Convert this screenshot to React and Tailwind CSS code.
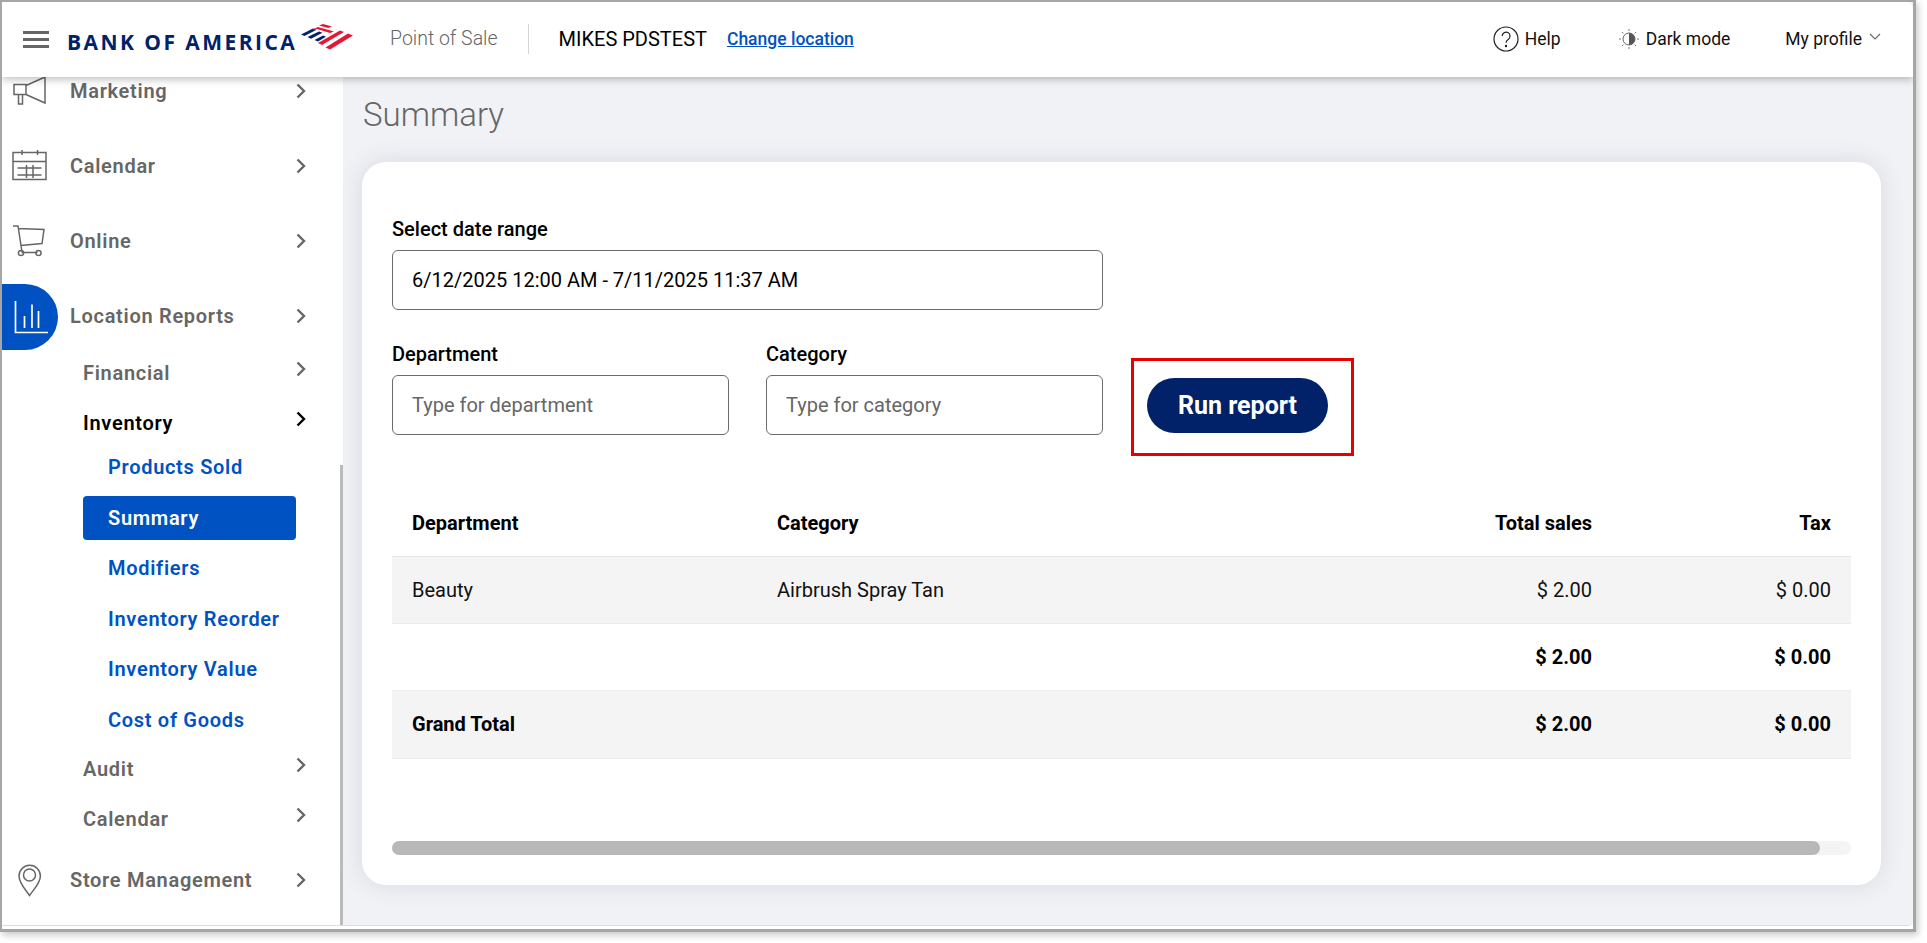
import React from "react";

const Chevron = ({ className = "", color = "#666" }) => (
  <svg width="12" height="16" viewBox="0 0 12 16" fill="none" className={"shrink-0 " + className}>
    <path d="M2.5 1.5 9 8l-6.5 6.5" stroke={color} strokeWidth="2.4" />
  </svg>
);

const MegaphoneIcon = () => (
  <svg width="56" height="50" viewBox="2.5 0 56 50" fill="none" stroke="#666" strokeWidth="1.5" className="shrink-0 overflow-visible">
    <path d="M14.5 18.5h12v10h-12zM26.5 19.5 45.5 11v26l-19-8.5M19 28.5V38h4v-9.5" />
  </svg>
);
const CalendarIcon = () => (
  <svg width="56" height="40" viewBox="2.5 0 56 40" fill="none" stroke="#666" strokeWidth="1.5" className="shrink-0">
    <path d="M13.5 6.5h33v27h-33zM13.5 15.5h33M22.5 4v5M38 4v5M18 22h24M18 29h24M27 19v13M33.5 19v13" />
  </svg>
);
const CartIcon = () => (
  <svg width="56" height="40" viewBox="3 -3 56 40" fill="none" stroke="#666" strokeWidth="1.5" className="shrink-0">
    <path d="M14 2h5l4 26M19 4.5l26 1-2 14-21.5 2M22.5 28.5h16" />
    <circle cx="22" cy="29" r="2.6" />
    <circle cx="39.5" cy="29" r="2.6" />
  </svg>
);
const ChartIcon = () => (
  <span className="mt-[2px] w-[56px] h-[66px] bg-[#0052c2] rounded-r-[33px] shrink-0 flex items-center">
    <svg width="56" height="66" viewBox="0 0 56 66" fill="none" stroke="#fff" strokeWidth="1.7">
      <path d="M13.5 17v31.5H46M22.5 32v12M30 20.5V44M36.5 27v17" />
    </svg>
  </span>
);
const PinIcon = () => (
  <svg width="56" height="34" viewBox="2.5 0 56 34" fill="none" stroke="#666" strokeWidth="1.5" className="shrink-0">
    <path d="M30 32.5C25.5 26 19.5 20 19.5 13a10.7 10.7 0 0 1 21.4 0C40.9 20 34.5 26 30 32.5Z" />
    <circle cx="30" cy="12" r="6" />
  </svg>
);

const navText = "text-[20px] font-semibold tracking-[0.7px] text-[#666] whitespace-nowrap";

const MainRow = ({ icon, label, className = "" }) => (
  <div className={"flex items-center shrink-0 h-[75px] pr-[36px] " + className}>
    {icon}
    <span className={navText + " ml-[12px]"}>{label}</span>
    <Chevron className="ml-auto" />
  </div>
);

const SubRow = ({ label, active, h = "h-[50px]" }) => (
  <div className={"flex items-center shrink-0 pl-[81px] pr-[36px] " + h}>
    <span className={navText + (active ? " !text-black" : "")}>{label}</span>
    <Chevron className="ml-auto mb-[8px]" color={active ? "#000" : "#666"} />
  </div>
);

const Leaf = ({ label, active }) => (
  <div
    className={
      "h-[44px] w-[213px] ml-[81px] pl-[25px] flex items-center rounded-[4px] text-[20px] font-semibold tracking-[0.7px] whitespace-nowrap " +
      (active ? "bg-[#0052c2] text-white" : "text-[#0052c2]")
    }
  >
    {label}
  </div>
);

const Sidebar = () => (
  <aside className="relative w-[341px] shrink-0 bg-white overflow-hidden flex flex-col">
    <div className="-mt-[24px] flex flex-col">
      <MainRow icon={<MegaphoneIcon />} label="Marketing" />
      <MainRow icon={<CalendarIcon />} label="Calendar" />
      <MainRow icon={<CartIcon />} label="Online" />
      <MainRow icon={<ChartIcon />} label="Location Reports" />
      <div className="-mt-[5px]">
        <SubRow label="Financial" />
        <SubRow label="Inventory" active h="h-[47px] pt-[3px]" />
        <div className="flex flex-col gap-[6.5px]">
          <Leaf label="Products Sold" />
          <Leaf label="Summary" active />
          <Leaf label="Modifiers" />
          <Leaf label="Inventory Reorder" />
          <Leaf label="Inventory Value" />
          <Leaf label="Cost of Goods" />
        </div>
        <div className="mt-[2px]">
          <SubRow label="Audit" />
          <SubRow label="Calendar" />
        </div>
      </div>
      <MainRow icon={<PinIcon />} label="Store Management" className="-mt-[1.5px]" />
    </div>
    <div className="absolute right-0 top-[388px] w-[3px] h-[461px] bg-[#bbbbbb]" />
  </aside>
);

const Flag = () => (
  <svg width="52" height="27" viewBox="0 0 52 27" className="shrink-0">
    <g fill="#012169">
      <polygon points="0,10.5 12,4.5 15.5,5.8 3.5,12" />
      <polygon points="6.5,13 18,7.5 21.5,8.8 10,14.8" />
      <polygon points="13.5,16 22,11.5 25,12.7 17,17.5" />
    </g>
    <g fill="#e31837">
      <polygon points="18,1.5 22,0 31,2.5 27,4" />
      <polygon points="10,6 17,3 33,7.5 29,9 16,5" />
      <polygon points="17,19 39,6.5 43,8 21,21" />
      <polygon points="24.5,23.5 47,9.5 52,11.5 29,25.5" />
    </g>
  </svg>
);

const Header = () => (
  <header className="relative z-10 h-[75px] pb-[1px] shrink-0 bg-white flex items-center shadow-[0_2px_8px_rgba(0,0,0,0.28)] rounded-tr-[6px]">
    <div className="ml-[21px] w-[26px] flex flex-col gap-[4px] shrink-0">
      <span className="block h-[3px] bg-[#666]" />
      <span className="block h-[3px] bg-[#666]" />
      <span className="block h-[3px] bg-[#666]" />
    </div>
    <div className="ml-[18px] flex items-center shrink-0">
      <span className="[font-family:'Open_Sans',sans-serif] text-[21px] leading-none font-bold tracking-[2.45px] text-[#012169] w-[234px] whitespace-nowrap mt-[6px]">
        BANK OF AMERICA
      </span>
      <span className="-mt-[4px]"><Flag /></span>
    </div>
    <span className="ml-[37px] text-[19.5px] font-light text-[#666] whitespace-nowrap">Point of Sale</span>
    <span className="ml-[30px] w-px h-[30px] bg-[#d4d4d4]" />
    <span className="ml-[30px] text-[20px] text-black whitespace-nowrap">MIKES PDSTEST</span>
    <a className="ml-[20px] text-[17.5px] font-medium text-[#0052c2] underline whitespace-nowrap">Change location</a>

    <div className="ml-auto flex items-center pr-[32px] text-[#111]">
      <svg width="26" height="26" viewBox="0 0 26 26" fill="none" stroke="#222" strokeWidth="1.2" className="shrink-0">
        <circle cx="13" cy="13" r="12" />
        <path d="M9.2 10a3.9 3.9 0 1 1 6.2 3.2c-1.5 1-2.4 1.8-2.4 3.6" />
        <circle cx="13" cy="20" r="0.6" fill="#222" />
      </svg>
      <span className="ml-[6px] text-[17.5px] whitespace-nowrap">Help</span>
      <svg width="22" height="22" viewBox="0 0 22 22" fill="none" className="ml-[57px] shrink-0">
        <circle cx="11" cy="11" r="6" stroke="#666" strokeWidth="1" />
        <path d="M11 5a6 6 0 0 1 0 12Z" fill="#555" />
        <path d="M11 1v2M11 19v2M1 11h2M19 11h2M4 4l1.4 1.4M16.6 16.6 18 18M4 18l1.4-1.4M16.6 5.4 18 4" stroke="#777" strokeWidth="1" />
      </svg>
      <span className="ml-[6px] text-[17.5px] whitespace-nowrap">Dark mode</span>
      <span className="ml-[55px] text-[17.5px] whitespace-nowrap">My profile</span>
      <svg width="12" height="8" viewBox="0 0 12 8" fill="none" stroke="#666" strokeWidth="1.1" className="ml-[7px] mb-[4px] shrink-0">
        <path d="m1 1 5 5 5-5" />
      </svg>
    </div>
  </header>
);

const fieldClass =
  "block w-full h-[60px] border border-[#6b6b6b] rounded-[6px] px-[19px] text-[20px] bg-white text-black placeholder-[#666] outline-none";

const Field = ({ label, value, placeholder, className = "" }) => (
  <label className={"flex flex-col " + className}>
    <span className="h-[24px] leading-[24px] text-[20px] font-medium text-black whitespace-nowrap">{label}</span>
    <input readOnly value={value} placeholder={placeholder} className={fieldClass + " mt-[9px]"} />
  </label>
);

const Report = () => (
  <table className="w-full table-fixed text-[20px] text-[#111] border-collapse mt-[34px]">
    <colgroup>
      <col className="w-[365px]" />
      <col className="w-[495px]" />
      <col className="w-[360px]" />
      <col className="w-[239px]" />
    </colgroup>
    <thead>
      <tr className="h-[66px] border-b border-[#e4e4e4] font-bold text-black">
        <th className="px-[20px] text-left font-bold">Department</th>
        <th className="px-[20px] text-left font-bold">Category</th>
        <th className="px-[20px] text-right font-bold">Total sales</th>
        <th className="px-[20px] text-right font-bold">Tax</th>
      </tr>
    </thead>
    <tbody>
      <tr className="h-[67px] bg-[#f4f4f4] border-b border-[#ececec]">
        <td className="px-[20px]">Beauty</td>
        <td className="px-[20px]">Airbrush Spray Tan</td>
        <td className="px-[20px] text-right">$ 2.00</td>
        <td className="px-[20px] text-right">$ 0.00</td>
      </tr>
      <tr className="h-[67px] font-bold text-black border-b border-[#ececec]">
        <td />
        <td />
        <td className="px-[20px] text-right">$ 2.00</td>
        <td className="px-[20px] text-right">$ 0.00</td>
      </tr>
      <tr className="h-[68px] bg-[#f4f4f4] font-bold text-black border-b border-[#ececec]">
        <td className="px-[20px]">Grand Total</td>
        <td />
        <td className="px-[20px] text-right">$ 2.00</td>
        <td className="px-[20px] text-right">$ 0.00</td>
      </tr>
    </tbody>
  </table>
);

const Main = () => (
  <main className="flex-1 min-w-0 bg-[#f1f2f6] pl-[19px] pr-[32px] flex flex-col">
    <h1 className="ml-[1px] mt-[16px] h-[44px] leading-[44px] text-[33px] font-light text-[#666]">Summary</h1>
    <section className="mt-[25px] h-[723px] rounded-[24px] bg-white px-[30px] pt-[55px] shadow-[0_0_24px_rgba(90,95,115,0.16)]">
      <Field label="Select date range" value="6/12/2025 12:00 AM - 7/11/2025 11:37 AM" className="w-[711px]" />
      <div className="mt-[32px] flex items-start">
        <Field label="Department" placeholder="Type for department" className="w-[337px]" />
        <Field label="Category" placeholder="Type for category" className="w-[337px] ml-[37px]" />
        <div className="ml-[28px] mt-[16px] w-[223px] h-[98px] border-[3px] border-[#e60000] pl-[13px] pb-[3px] flex items-center">
          <button className="w-[181px] h-[55px] rounded-full bg-[#012169] text-white text-[25px] font-bold">Run report</button>
        </div>
      </div>
      <Report />
      <div className="mt-[82px] h-[14px] rounded-full bg-[#f4f4f4]">
        <div className="h-full w-[1428px] rounded-full bg-[#b8b8b8]" />
      </div>
    </section>
  </main>
);

export default function App() {
  return (
    <div className="w-[1927px] h-[943px] bg-white overflow-hidden [font-family:Roboto,sans-serif]">
      <div className="w-[1916px] h-[932px] border-t-2 border-l-2 border-r-[3px] border-b-[3px] border-[#a6a6a6] shadow-[2px_3px_7px_rgba(0,0,0,0.22)] flex flex-col">
        <div className="h-[924px] flex flex-col border-b border-[#dcdcdc] rounded-br-[5px] overflow-hidden">
          <Header />
          <div className="flex-1 min-h-0 flex">
            <Sidebar />
            <Main />
          </div>
        </div>
      </div>
    </div>
  );
}
